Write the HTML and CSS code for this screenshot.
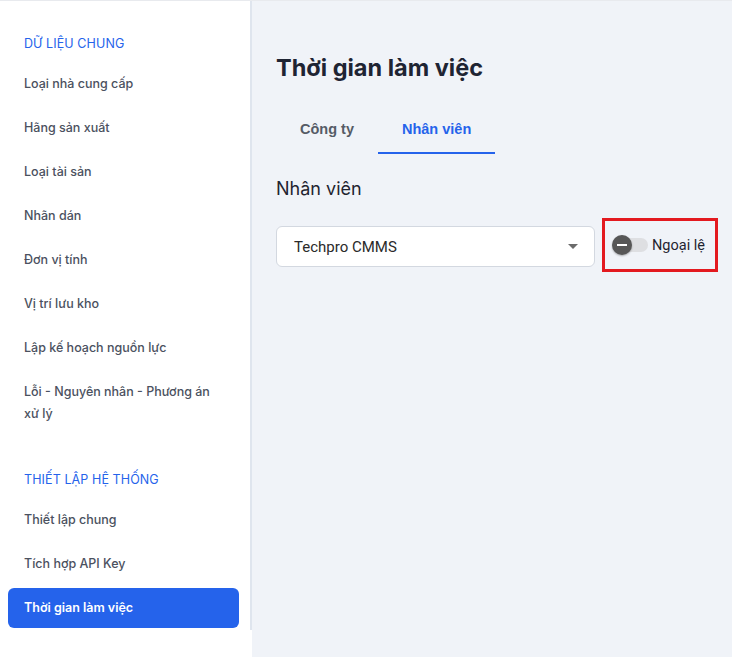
FILE: index.html
```html
<!DOCTYPE html>
<html lang="vi">
<head>
<meta charset="utf-8">
<title>Thời gian làm việc</title>
<link rel="stylesheet" href="styles.css">
</head>
<body>
<div class="page">
  <aside class="sidebar">
    <nav class="nav">
      <div class="nav-heading first">DỮ LIỆU CHUNG</div>
      <a class="nav-item">Loại nhà cung cấp</a>
      <a class="nav-item">Hãng sản xuất</a>
      <a class="nav-item">Loại tài sản</a>
      <a class="nav-item">Nhãn dán</a>
      <a class="nav-item">Đơn vị tính</a>
      <a class="nav-item">Vị trí lưu kho</a>
      <a class="nav-item">Lập kế hoạch nguồn lực</a>
      <a class="nav-item multi">Lỗi - Nguyên nhân - Phương án xử lý</a>
      <div class="nav-heading">THIẾT LẬP HỆ THỐNG</div>
      <a class="nav-item">Thiết lập chung</a>
      <a class="nav-item">Tích hợp API Key</a>
      <a class="nav-item active">Thời gian làm việc</a>
    </nav>
  </aside>
  <main class="main">
    <h1 class="title">Thời gian làm việc</h1>
    <div class="tabs">
      <div class="tab">Công ty</div>
      <div class="tab active">Nhân viên</div>
    </div>
    <h2 class="subtitle">Nhân viên</h2>
    <div class="row">
      <div class="select">
        <span class="select-value">Techpro CMMS</span>
        <span class="caret"></span>
      </div>
      <div class="highlight">
        <label class="switch">
          <span class="track"></span>
          <span class="thumb"><span class="minus"></span></span>
        </label>
        <span class="switch-label">Ngoại lệ</span>
      </div>
    </div>
  </main>
</div>
</body>
</html>
```

FILE: styles.css
```css
* { box-sizing: border-box; }
html, body { margin: 0; padding: 0; }
body {
  font-family: Inter, "Noto Sans", sans-serif;
  background: #f0f3f8;
  width: 732px;
  height: 657px;
  overflow: hidden;
  border-top: 1px solid #e8eaee;
}
.page {
  display: flex;
  height: 656px;
}
.sidebar {
  width: 252px;
  flex: 0 0 252px;
  background: #ffffff;
}
.nav {
  height: 629px;
  border-right: 2px solid #dfe5ee;
  padding-top: 32px;
  display: flex;
  flex-direction: column;
}
.nav-heading {
  font-size: 12.5px;
  line-height: 22px;
  color: #2563eb;
  letter-spacing: 0.1px;
  padding-left: 24px;
  margin-bottom: 7px;
}
.nav-heading:not(.first) { margin-top: 33px; }
.nav-item {
  display: flex;
  align-items: center;
  min-height: 40px;
  margin: 2px 11px 2px 8px;
  padding: 9px 16px;
  font-size: 12.5px;
  font-weight: 500;
  line-height: 22px;
  color: #4b5160;
  border-radius: 6px;
}
.nav-item.active {
  background: #2563eb;
  color: #ffffff;
  font-weight: 600;
}
.main {
  flex: 1;
  padding: 51px 24px 0 24px;
}
.title {
  margin: 0;
  font-size: 23.5px;
  line-height: 32px;
  font-weight: 700;
  color: #1e2433;
}
.tabs {
  display: flex;
  margin-top: 22px;
}
.tab {
  height: 48px;
  padding: 0 24px;
  display: flex;
  align-items: center;
  font-family: "Liberation Sans", Arial, sans-serif;
  font-weight: 700;
  font-size: 14.5px;
  color: #555b66;
  border-bottom: 2px solid transparent;
}
.tab.active {
  color: #2563eb;
  border-bottom-color: #2563eb;
}
.subtitle {
  margin: 21px 0 0 0;
  font-size: 18px;
  line-height: 28px;
  font-weight: 400;
  color: #1f2430;
}
.row {
  display: flex;
  align-items: flex-start;
  margin-top: 15px;
  gap: 7px;
}
.select {
  width: 319px;
  height: 41px;
  margin-top: 8px;
  background: #ffffff;
  border: 1px solid #d3d8e0;
  border-radius: 6px;
  display: flex;
  align-items: center;
  justify-content: space-between;
  padding: 0 16px 0 17px;
  font-family: Roboto, Arial, sans-serif;
  font-size: 15px;
  color: #2a2a2a;
}
.caret {
  width: 0;
  height: 0;
  border-left: 5px solid transparent;
  border-right: 5px solid transparent;
  border-top: 5px solid #6b6b6b;
}
.highlight {
  width: 116px;
  height: 54px;
  border: 3px solid #e3191f;
  display: flex;
  align-items: center;
  padding-left: 7px;
}
.switch {
  position: relative;
  width: 36px;
  height: 20px;
  display: block;
}
.track {
  position: absolute;
  left: 4px;
  top: 3px;
  width: 32px;
  height: 14px;
  border-radius: 7px;
  background: #dedfe2;
}
.thumb {
  position: absolute;
  left: 0;
  top: 0;
  width: 20px;
  height: 20px;
  border-radius: 50%;
  background: #575757;
  box-shadow: 0 1px 2px rgba(0,0,0,0.3);
  display: flex;
  align-items: center;
  justify-content: center;
}
.minus {
  width: 10px;
  height: 2px;
  background: #ffffff;
}
.switch-label {
  margin-left: 4px;
  font-family: Roboto, Arial, sans-serif;
  font-size: 14.5px;
  color: #1f2430;
}
```
